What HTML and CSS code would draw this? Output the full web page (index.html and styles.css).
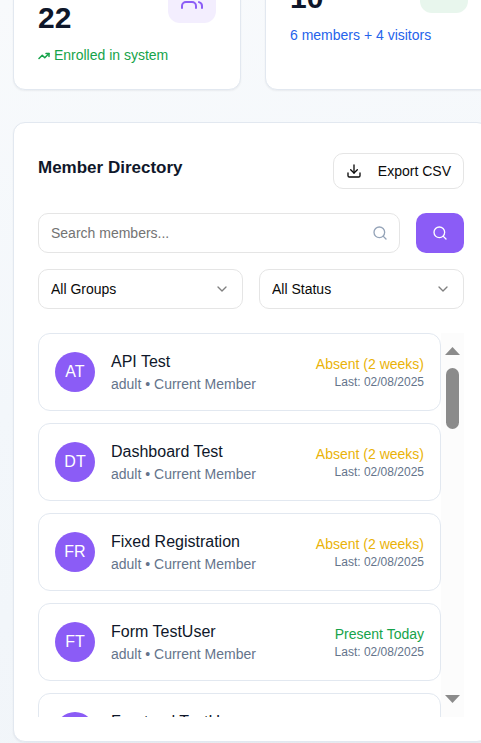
FILE: index.html
```html
<!DOCTYPE html>
<html lang="en">
<head>
<meta charset="utf-8">
<meta name="viewport" content="width=device-width, initial-scale=1">
<title>Member Directory</title>
<link rel="stylesheet" href="styles.css">
</head>
<body>
<main class="page">
  <section class="stats">
    <article class="card stat">
      <div class="stat-body stat-body-long">
        <p class="stat-value">22</p>
        <p class="stat-note green">
          <svg class="icon-trend" viewBox="0 0 24 24"><path d="M22 7l-8.500 8.500-5-5L2 17"/><path d="M16 7h6v6"/></svg>
          Enrolled in system
        </p>
      </div>
      <div class="stat-tile violet">
        <svg class="icon-users" viewBox="0 0 24 24"><path d="M16 21v-2a4 4 0 0 0-4-4H6a4 4 0 0 0-4 4v2"/><circle cx="9" cy="7" r="4"/><path d="M22 21v-2a4 4 0 0 0-3-3.870"/><path d="M16 3.130a4 4 0 0 1 0 7.750"/></svg>
      </div>
    </article>
    <article class="card stat">
      <div class="stat-body">
        <p class="stat-value">10</p>
        <p class="stat-note blue">6 members + 4 visitors</p>
      </div>
      <div class="stat-tile mint"></div>
    </article>
  </section>

  <section class="card directory">
    <header class="directory-head">
      <h2>Member Directory</h2>
      <button type="button" class="export">
        <svg class="icon" viewBox="0 0 24 24"><path d="M21 15v4a2 2 0 0 1-2 2H5a2 2 0 0 1-2-2v-4"/><path d="M7 10l5 5 5-5"/><path d="M12 15V3"/></svg>
        Export CSV
      </button>
    </header>

    <form class="filters">
      <div class="search-row">
        <div class="field">
          <input type="text" class="control" placeholder="Search members..." aria-label="Search members">
          <svg class="icon field-icon slate" viewBox="0 0 24 24"><circle cx="11" cy="11" r="8"/><path d="M21 21l-4.300-4.300"/></svg>
        </div>
        <button type="button" class="search-button" aria-label="Search">
          <svg class="icon" viewBox="0 0 24 24"><circle cx="11" cy="11" r="8"/><path d="M21 21l-4.300-4.300"/></svg>
        </button>
      </div>
      <div class="select-row">
        <div class="field">
          <select class="control" aria-label="Group"><option>All Groups</option></select>
          <svg class="icon field-icon chevron" viewBox="0 0 24 24"><path d="M6 9l6 6 6-6"/></svg>
        </div>
        <div class="field">
          <select class="control" aria-label="Status"><option>All Status</option></select>
          <svg class="icon field-icon chevron" viewBox="0 0 24 24"><path d="M6 9l6 6 6-6"/></svg>
        </div>
      </div>
    </form>

    <div class="list-frame">
      <ul class="members">
        <li class="member">
          <span class="avatar">AT</span>
          <div class="who"><p class="name">API Test</p><p class="role">adult • Current Member</p></div>
          <div class="attendance"><p class="status amber">Absent (2 weeks)</p><p class="last">Last: 02/08/2025</p></div>
        </li>
        <li class="member">
          <span class="avatar">DT</span>
          <div class="who"><p class="name">Dashboard Test</p><p class="role">adult • Current Member</p></div>
          <div class="attendance"><p class="status amber">Absent (2 weeks)</p><p class="last">Last: 02/08/2025</p></div>
        </li>
        <li class="member">
          <span class="avatar">FR</span>
          <div class="who"><p class="name">Fixed Registration</p><p class="role">adult • Current Member</p></div>
          <div class="attendance"><p class="status amber">Absent (2 weeks)</p><p class="last">Last: 02/08/2025</p></div>
        </li>
        <li class="member">
          <span class="avatar">FT</span>
          <div class="who"><p class="name">Form TestUser</p><p class="role">adult • Current Member</p></div>
          <div class="attendance"><p class="status green">Present Today</p><p class="last">Last: 02/08/2025</p></div>
        </li>
        <li class="member">
          <span class="avatar"></span>
          <div class="who"><p class="name">Frontend TestUser</p></div>
        </li>
      </ul>
      <div class="scrollbar" aria-hidden="true">
        <svg class="arrow" viewBox="0 0 15 8"><path d="M7.500 0L15 8H0z"/></svg>
        <span class="thumb"></span>
        <svg class="arrow arrow-down" viewBox="0 0 15 8"><path d="M0 0h15L7.500 8z"/></svg>
      </div>
    </div>
  </section>
</main>
</body>
</html>
```

FILE: styles.css
```css
* { box-sizing: border-box; }

html { height: 100%; overflow: hidden; }

body {
  margin: 0;
  height: 100%;
  overflow: hidden;
  background: linear-gradient(170deg, #f8fafc 0%, #f3f7fb 50%, #f1f5f9 100%);
  color: #0f172a;
  font-family: "Liberation Sans", Arial, sans-serif;
  font-size: 14px;
  line-height: 20px;
}

p, h2, ul { margin: 0; padding: 0; }
ul { list-style: none; }

button, input, select { font: inherit; }

svg {
  flex: none;
  fill: none;
  stroke: currentColor;
  stroke-width: 2;
  stroke-linecap: round;
  stroke-linejoin: round;
}

.icon { width: 16px; height: 16px; }

/* The page is scrolled: the top of the cards lies above the window */
.page {
  display: flow-root;
  padding-left: 13px;
}

.card {
  background: #fff;
  border: 1px solid #e2e8f0;
  border-radius: 12px;
  box-shadow: 0 1px 2px rgba(15, 23, 42, 0.06);
  padding: 24px;
}

.stats {
  display: grid;
  grid-template-columns: 1fr 1fr;
  gap: 24px;
  margin: -92px -12px 32px 0;
}

.stat {
  display: grid;
  grid-template-columns: 1fr 48px;
  align-items: center;
  align-content: start;
}

.stat-body { padding-top: 48px; min-width: 0; }
.stat-body-long { padding-top: 68px; }
.stat-note { margin-right: -48px; }

.stat-value {
  font-size: 30px;
  line-height: 34px;
  font-weight: 700;
  margin-bottom: 10px;
}

.icon-trend {
  width: 12px;
  height: 12px;
  vertical-align: -2px;
  stroke-width: 3;
}

.stat-tile {
  display: grid;
  place-items: center;
  width: 48px;
  height: 48px;
  border-radius: 12px;
}

.icon-users { width: 24px; height: 24px; }

.violet { background: #f3eefe; color: #8b5cf6; }
.mint { background: #e8f6ed; }
.green { color: #16a34a; }
.blue { color: #2563eb; }
.amber { color: #eab308; }
.slate { color: #94a3b8; }

.directory { margin-right: -8px; }

.directory-head {
  display: flex;
  justify-content: space-between;
  align-items: flex-start;
  padding-top: 6px;
  margin-bottom: 24px;
}

.directory-head h2 {
  font-size: 17px;
  line-height: 30px;
  font-weight: 700;
}

.export {
  display: flex;
  align-items: center;
  gap: 16px;
  height: 36px;
  padding: 0 12px;
  border: 1px solid #e5e5e5;
  border-radius: 10px;
  background: #fff;
  color: #0a0a0a;
}

.filters { display: grid; gap: 16px; margin-bottom: 24px; }
.search-row { display: flex; gap: 16px; }
.select-row { display: grid; grid-template-columns: 1fr 1fr; gap: 16px; }

.field { position: relative; flex: 1; }

.control {
  display: block;
  width: 100%;
  height: 40px;
  padding: 0 12px;
  border: 1px solid #e5e5e5;
  border-radius: 10px;
  background: #fff;
  color: #0a0a0a;
  appearance: none;
}

.control::placeholder { color: #737373; opacity: 1; }

.field-icon {
  position: absolute;
  right: 12px;
  top: 12px;
  pointer-events: none;
}

.chevron { right: 13px; color: #808080; }

.search-button {
  display: grid;
  place-items: center;
  width: 48px;
  height: 40px;
  padding: 0;
  border: 0;
  border-radius: 10px;
  background: #8b5cf6;
  color: #fff;
}

.list-frame {
  display: flex;
  height: 384px;
  overflow: hidden;
}

.members { flex: 1; display: grid; gap: 12px; align-content: start; }

.member {
  display: flex;
  align-items: center;
  gap: 16px;
  height: 78px;
  padding: 16px;
  border: 1px solid #e2e8f0;
  border-radius: 12px;
}

.avatar {
  display: grid;
  place-items: center;
  width: 40px;
  height: 40px;
  border-radius: 50%;
  background: #8b5cf6;
  color: #fff;
  font-size: 16px;
}

.who { flex: 1; min-height: 44px; }
.name { font-size: 16px; line-height: 24px; }
.role { color: #64748b; }
.attendance { text-align: right; }
.last { font-size: 12px; line-height: 16px; color: #64748b; }

.scrollbar {
  display: flex;
  flex-direction: column;
  align-items: center;
  width: 23px;
  padding: 14px 0;
  background: #fcfcfc;
}

.arrow { width: 15px; height: 8px; fill: #8b8b8b; stroke: none; }
.arrow-down { margin-top: auto; }

.thumb {
  width: 13px;
  height: 61px;
  margin-top: 13px;
  border-radius: 7px;
  background: #8b8b8b;
}
```
